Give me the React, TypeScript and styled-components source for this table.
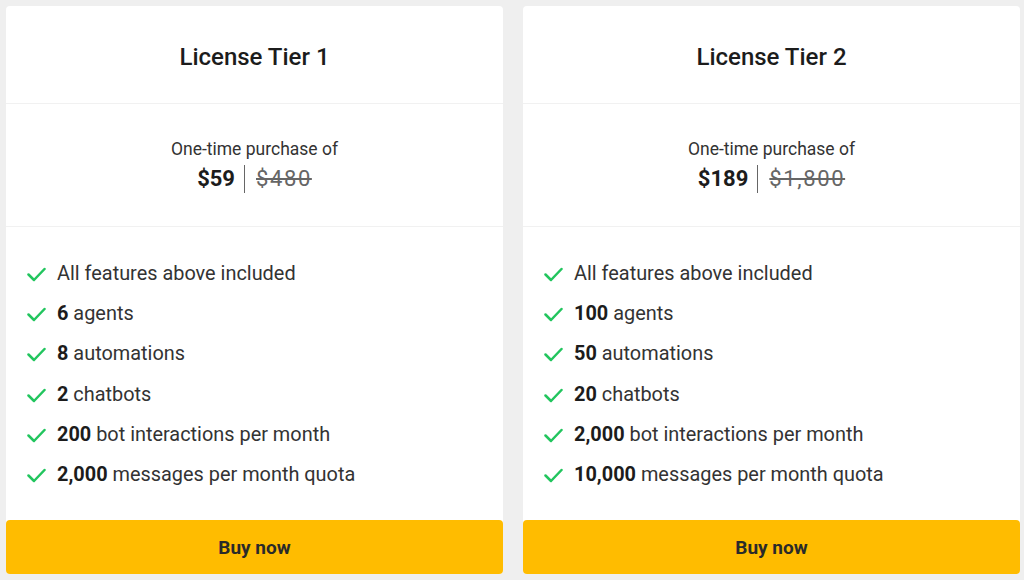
import React from "react";
import styled, { createGlobalStyle } from "styled-components";

const Global = createGlobalStyle`
  html, body { margin: 0; padding: 0; background: #efefef; }
  body { font-family: Roboto, "Liberation Sans", Arial, sans-serif; color: #222; }
`;

const Page = styled.div`
  display: flex;
  gap: 20px;
  padding: 6px 4px 6px 6px;
  width: 1024px;
  height: 580px;
  box-sizing: border-box;
`;

const Card = styled.div`
  flex: 1;
  display: flex;
  flex-direction: column;
  background: #fff;
  border-radius: 4px;
`;

const Header = styled.div`
  height: 98px;
  padding-top: 4px;
  box-sizing: border-box;
  display: flex;
  align-items: center;
  justify-content: center;
  border-bottom: 1px solid #f1f1f1;
`;

const Title = styled.h2`
  margin: 0;
  font-size: 24px;
  font-weight: 500;
  color: #1c1c1c;
`;

const PriceBox = styled.div`
  height: 122px;
  display: flex;
  flex-direction: column;
  align-items: center;
  justify-content: center;
  gap: 5px;
  border-bottom: 1px solid #f1f1f1;
`;

const PriceLabel = styled.div`
  font-size: 17.5px;
  color: #333;
  line-height: 22px;
`;

const PriceRow = styled.div`
  display: flex;
  align-items: center;
  font-size: 22px;
  line-height: 28px;
`;

const Price = styled.span`
  font-weight: 700;
  color: #1c1c1c;
  padding-right: 9px;
  border-right: 1px solid #666;
`;

const OldPrice = styled.span`
  color: #666;
  text-decoration: line-through;
  letter-spacing: 1.6px;
  padding-left: 11px;
`;

const Features = styled.ul`
  flex: 1;
  list-style: none;
  margin: 0;
  padding: 35px 0 0 20px;
  display: flex;
  flex-direction: column;
  gap: 16.2px;
`;

const Feature = styled.li`
  display: flex;
  align-items: center;
  gap: 11px;
  font-size: 19.9px;
  line-height: 24px;
  color: #333;
  b { font-weight: 700; color: #1c1c1c; }
`;

const Check = styled.svg`
  width: 20px;
  height: 20px;
  flex: none;
`;

const BuyButton = styled.button`
  height: 54px;
  border: none;
  border-radius: 4px;
  background: #ffbc00;
  font-family: inherit;
  font-size: 19px;
  font-weight: 700;
  color: #2a2a2a;
  cursor: pointer;
`;

const CheckIcon = () => (
  <Check viewBox="0 0 20 20">
    <path d="M2.5 10.5 L8 16 L18.5 5" fill="none" stroke="#22c55e" strokeWidth="2.5" strokeLinecap="round" strokeLinejoin="round" />
  </Check>
);

type Tier = {
  title: string;
  price: string;
  old: string;
  feats: [string | null, string][];
};

const tiers: Tier[] = [
  {
    title: "License Tier 1",
    price: "$59",
    old: "$480",
    feats: [
      [null, "All features above included"],
      ["6", " agents"],
      ["8", " automations"],
      ["2", " chatbots"],
      ["200", " bot interactions per month"],
      ["2,000", " messages per month quota"],
    ],
  },
  {
    title: "License Tier 2",
    price: "$189",
    old: "$1,800",
    feats: [
      [null, "All features above included"],
      ["100", " agents"],
      ["50", " automations"],
      ["20", " chatbots"],
      ["2,000", " bot interactions per month"],
      ["10,000", " messages per month quota"],
    ],
  },
];

export default function App() {
  return (
    <>
      <Global />
      <Page>
        {tiers.map((t) => (
          <Card key={t.title}>
            <Header>
              <Title>{t.title}</Title>
            </Header>
            <PriceBox>
              <PriceLabel>One-time purchase of</PriceLabel>
              <PriceRow>
                <Price>{t.price}</Price>
                <OldPrice>{t.old}</OldPrice>
              </PriceRow>
            </PriceBox>
            <Features>
              {t.feats.map(([b, rest], i) => (
                <Feature key={i}>
                  <CheckIcon />
                  <span>
                    {b && <b>{b}</b>}
                    {rest}
                  </span>
                </Feature>
              ))}
            </Features>
            <BuyButton>Buy now</BuyButton>
          </Card>
        ))}
      </Page>
    </>
  );
}
